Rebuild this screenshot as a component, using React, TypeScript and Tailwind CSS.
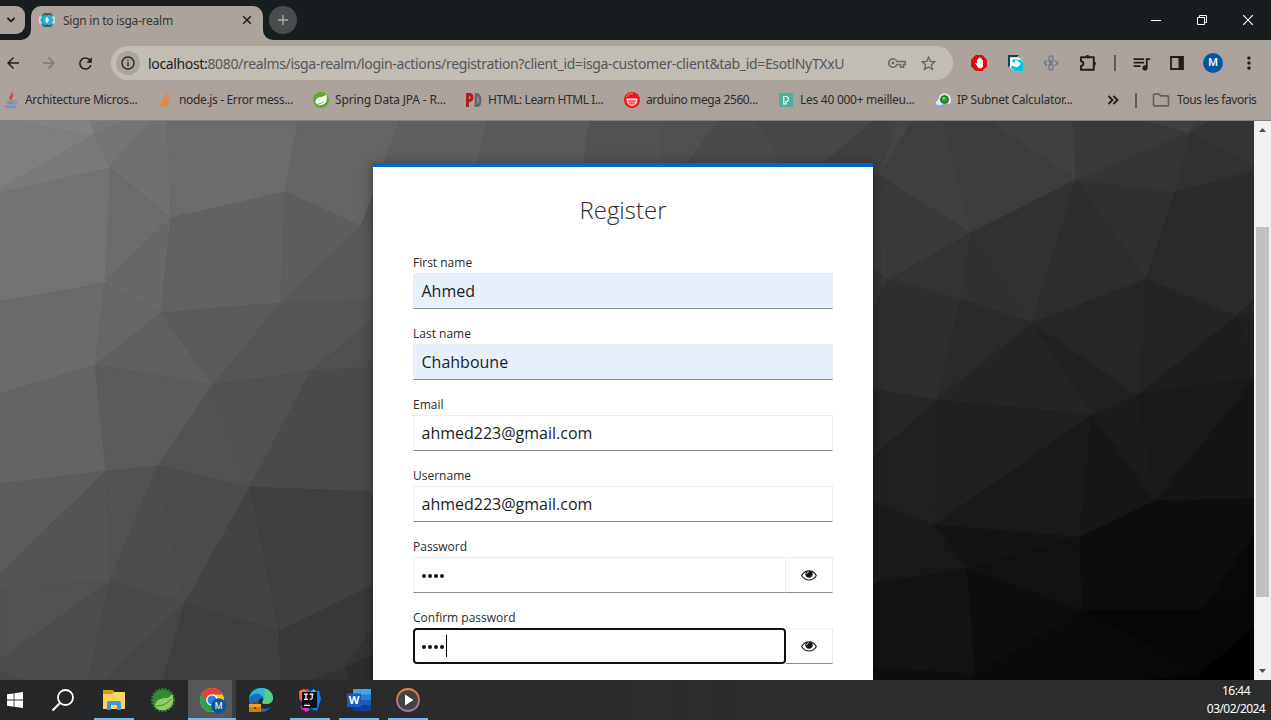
import type { ReactNode } from "react";
import {
  MdArrowBack,
  MdArrowForward,
  MdRefresh,
  MdInfoOutline,
  MdStarOutline,
  MdQueueMusic,
  MdMoreVert,
  MdOutlineFolder,
  MdOutlineExtension,
} from "react-icons/md";

const facets: [string, string][] = [
  ["0,121 10,121 94,135 0,189", "#7f7f7f"],
  ["10,121 91,121 94,135", "#838383"],
  ["91,121 127,121 94,135", "#797979"],
  ["94,135 127,121 151,121 110,168", "#757575"],
  ["94,135 110,168 0,193 0,189", "#7a7a7a"],
  ["151,121 167,121 171,218 110,168", "#717171"],
  ["110,168 171,218 105,283", "#6c6c6c"],
  ["0,193 110,168 105,283 0,302", "#737373"],
  ["167,121 298,121 285,192 171,218", "#6b6b6b"],
  ["298,121 399,121 373,195 361,226 285,192", "#646464"],
  ["171,218 105,283 161,313", "#686868"],
  ["171,218 285,192 281,303 161,313", "#616161"],
  ["285,192 361,226 281,303", "#5d5d5d"],
  ["361,226 380,225 380,300 281,303", "#585858"],
  ["361,226 373,195 380,195 380,225", "#575757"],
  ["0,302 105,283 95,365 0,394", "#6a6a6a"],
  ["105,283 161,313 95,365", "#656565"],
  ["161,313 95,365 213,385", "#5f5f5f"],
  ["161,313 281,303 213,385", "#5a5a5a"],
  ["281,303 213,385 311,371", "#555555"],
  ["281,303 380,300 380,312 311,371", "#555555"],
  ["311,371 380,312 380,367", "#505050"],
  ["95,365 0,394 0,484 106,471", "#636363"],
  ["95,365 106,471 158,466 213,385", "#5b5b5b"],
  ["213,385 158,466 250,487", "#525252"],
  ["213,385 311,371 250,487", "#515151"],
  ["311,371 380,367 380,492 250,487", "#4b4b4b"],
  ["106,471 0,484 0,574", "#5c5c5c"],
  ["106,471 0,574 0,588 110,581", "#545454"],
  ["106,471 158,466 110,581", "#525252"],
  ["158,466 110,581 185,603", "#4d4d4d"],
  ["158,466 185,603 250,487", "#4c4c4c"],
  ["250,487 185,603 279,631", "#444444"],
  ["250,487 380,492 380,582 279,631", "#404040"],
  ["110,581 0,588 0,660", "#525252"],
  ["110,581 0,660 0,671 23,680 89,680", "#4d4d4d"],
  ["0,671 23,680 0,680", "#484848"],
  ["110,581 89,680 107,680 185,603", "#4a4a4a"],
  ["185,603 107,680 163,680", "#464646"],
  ["185,603 163,680 281,680 279,631", "#3f3f3f"],
  ["279,631 281,680 313,680 345,667 380,618 380,582", "#383838"],
  ["345,667 380,618 380,652", "#333333"],
  ["345,667 380,652 380,680 348,680", "#2c2c2c"],
  ["313,680 345,667 348,680", "#323232"],
  ["399,121 487,121 475,175 380,175", "#5e5e5e"],
  ["487,121 590,121 581,175 475,175", "#595959"],
  ["590,121 664,121 660,175 581,175", "#525252"],
  ["664,121 718,121 679,175 660,175", "#505050"],
  ["718,121 757,121 790,175 679,175", "#4b4b4b"],
  ["757,121 873,121 810,175 790,175", "#484848"],
  ["873,121 896,121 880,176 810,175", "#414141"],
  ["896,121 912,121 880,176", "#454545"],
  ["912,121 943,121 971,233 880,176", "#3f3f3f"],
  ["943,121 990,121 1076,180 971,233", "#3c3c3c"],
  ["990,121 1073,121 1076,180", "#404040"],
  ["1073,121 1147,121 1189,133 1076,180", "#393939"],
  ["1147,121 1195,121 1189,133", "#414141"],
  ["1195,121 1211,121 1189,133", "#3b3b3b"],
  ["1211,121 1254,121 1254,166 1189,133", "#343434"],
  ["1189,133 1254,166 1254,171 1175,192", "#313131"],
  ["1076,180 1189,133 1175,192", "#343434"],
  ["1076,180 1175,192 1146,279", "#303030"],
  ["870,170 880,176 888,280 870,265", "#3b3b3b"],
  ["880,176 971,233 888,280", "#393939"],
  ["870,265 888,280 870,312", "#343434"],
  ["971,233 888,280 961,299", "#333333"],
  ["971,233 961,299 1032,323", "#303030"],
  ["971,233 1032,323 1076,180", "#313131"],
  ["1032,323 1076,180 1146,279", "#2d2d2d"],
  ["1175,192 1146,279 1236,316", "#2a2a2a"],
  ["1175,192 1254,171 1254,299 1236,316", "#2b2b2b"],
  ["1236,316 1254,299 1254,313", "#242424"],
  ["1236,316 1254,313 1254,363", "#202020"],
  ["1236,316 1137,395 1146,279", "#242424"],
  ["1032,323 1146,279 1137,395", "#262626"],
  ["1032,323 1137,395 1092,415", "#212121"],
  ["888,280 961,299 937,400 870,388 870,312", "#2e2e2e"],
  ["961,299 1032,323 937,400", "#2a2a2a"],
  ["937,400 1032,323 1092,415", "#252525"],
  ["1236,316 1254,363 1254,377 1137,395", "#1e1e1e"],
  ["1137,395 1254,377 1254,380 1155,501", "#1a1a1a"],
  ["1155,501 1254,380 1254,498", "#151515"],
  ["1137,395 1155,501 1092,415", "#1c1c1c"],
  ["937,400 870,388 870,459", "#272727"],
  ["937,400 870,459 870,500 934,525", "#212121"],
  ["937,400 1092,415 934,525", "#202020"],
  ["934,525 1092,415 1080,537", "#1a1a1a"],
  ["1092,415 1080,537 1155,501", "#171717"],
  ["1080,537 1155,501 1202,610", "#0e0e0e"],
  ["1155,501 1254,498 1254,533 1202,610", "#0d0d0d"],
  ["1202,610 1254,533 1254,597", "#080808"],
  ["1202,610 1254,597 1254,625 1201,674", "#060606"],
  ["1201,674 1254,625 1254,680 1195,680", "#000000"],
  ["934,525 870,500 870,584 876,583", "#1b1b1b"],
  ["934,525 876,583 967,569", "#181818"],
  ["934,525 967,569 1080,537", "#141414"],
  ["967,569 1080,537 1082,610", "#111111"],
  ["1080,537 1082,610 1202,610", "#0c0c0c"],
  ["876,583 967,569 975,674 870,667 870,584", "#131313"],
  ["967,569 1082,610 975,674", "#0d0d0d"],
  ["975,674 1082,610 1039,680 968,680", "#0a0a0a"],
  ["1082,610 1202,610 1201,674", "#060606"],
  ["1082,610 1201,674 1150,680 1039,680", "#080808"],
  ["975,674 870,667 870,680 968,680", "#0e0e0e"],
  ["1201,674 1150,680 1195,680", "#030303"],
];

function Backdrop() {
  return (
    <svg
      viewBox="0 121 1254 559"
      className="col-start-1 row-start-1 h-[559px] w-[1254px] bg-[#404040]"
    >
      {facets.map(([points, color]) => (
        <polygon key={points} points={points} fill={color} stroke={color} strokeWidth="0.6" />
      ))}
    </svg>
  );
}

/* ---------- favicons ---------- */

function KeycloakIcon() {
  return (
    <svg viewBox="0 0 16 14" className="h-[14px] w-4">
      <path d="M4.500 0h7.500l1.500 2.500v9L12 14H4.500L3 11.500v-9z" fill="#56565a" />
      <path d="M0 3.500h16v7H0z" fill="#cfd3d6" />
      <path d="M7 1.800 4.500 1.800 1.500 7l3 5.200H7L4.500 7z" fill="#00a9d4" />
      <path d="M9 1.800h2.500L14.500 7l-3 5.200H9L11.500 7z" fill="#19b9e2" />
      <path d="M5.500 2.500h5L13 7l-2.500 4.500h-5L3.500 7z" fill="#1fb6de" />
      <path d="M8 3.500 10 7l-2 3.500L6 7z" fill="#f1f6f8" />
    </svg>
  );
}

function JavaIcon() {
  return (
    <svg viewBox="0 0 16 16" className="size-4" fill="none">
      <path d="M9 .5c1.500 2-3.500 3.500-2 6 .4.700 1 1.200 1 1.800M10.500 3.500c-2.500 1.200-2.500 2.200-1.500 3.400" stroke="#d8452c" strokeWidth="1.400" />
      <path d="M4 9.200c2 .8 5.500.8 7.500 0M4.500 11.200c2 .7 4.500.7 6.500 0M2 13.500c1 2 10 2 11.500.3" stroke="#6c8cd6" strokeWidth="1.700" />
      <path d="M12 9c2.500-.6 2 2-.5 2.400" stroke="#6c8cd6" strokeWidth="1.100" />
    </svg>
  );
}

function StackIcon() {
  return (
    <svg viewBox="0 0 16 16" className="size-4" fill="none">
      <path d="M2.800 10.500v4.400h9.400v-4.400" stroke="#a3a19e" strokeWidth="1.100" />
      <path d="M4.500 12.800h6.300M4.600 10.300l6.300.7M5.100 7.600l6 1.900M6.400 4.900l5 3.300M9 2l3.200 4.900" stroke="#f48024" strokeWidth="1.500" />
    </svg>
  );
}

function SpringIcon() {
  return (
    <svg viewBox="0 0 16 16" className="size-4">
      <circle cx="8" cy="8" r="8" fill="#5fa832" />
      <path d="M13.300 2.200c1 3.800.8 7.200-1.500 9.300-2.200 2-5.700 1.700-8.300 1.500 3-.4 6-1.300 8-4-2 1.700-4.300 2.200-6.500 2.700-2.700.5-3-2.200-1.800-4.300C5 4 10.500 6 13.300 2.200z" fill="#fff" />
    </svg>
  );
}

function PdIcon() {
  return (
    <svg viewBox="0 0 16 14" className="h-[14px] w-4" fill="none" strokeWidth="2.800">
      <path d="M1.500 14V1.500h2c3.200 0 3.200 6 0 6H2" stroke="#b3161b" />
      <path d="M10 1.500v11h1.300c3.700 0 3.700-11 0-11z" stroke="#666" />
    </svg>
  );
}

function ArduinoIcon() {
  return (
    <svg viewBox="0 0 16 16" className="size-4" fill="none">
      <circle cx="8" cy="8" r="8" fill="#ee1515" />
      <path d="M3 7h10c-.2 8-9.800 8-10 0z" fill="#fbb" />
      <path d="M2.800 7h10.400M3 7c0 8.500 10 8.500 10 0" stroke="#fff" strokeWidth="1.100" />
      <path d="M3.500 9.200h9M5 11.400h6M6 7.500v5.500M8 7.500v6M10 7.500v5.500" stroke="#ee3535" strokeWidth=".7" />
      <path d="M2.500 5C4 2.300 6.500 1.400 9 1.700" stroke="#ff8b8b" />
    </svg>
  );
}

function PIcon() {
  return (
    <svg viewBox="0 0 14 14" className="size-[14px]">
      <rect width="14" height="14" rx="1.500" fill="#50ae9f" />
      <path d="M4.700 11V3.500h3.100l1.700 1.800v1.500L8.300 8.500H7V11z" fill="none" stroke="#fff" strokeWidth="1.200" />
    </svg>
  );
}

function SubnetIcon() {
  return (
    <svg viewBox="0 0 16 16" className="size-4">
      <path d="M1 12C0 9 4 8 4 6c0-3 4-6 8-4 4 1 4 5 4 7 0 4-4 3-7 4-4 3-7 2-8-1z" fill="#dfe8f2" />
      <path d="M1 12c2 2 5 1 8 0l5-1c-2 3-10 6-13 3z" fill="#86a5d2" />
      <circle cx="9.500" cy="7.500" r="4.300" fill="#2b3c33" />
      <circle cx="9.500" cy="7.500" r="3.200" fill="#22ad18" />
      <circle cx="8.800" cy="6.200" r="1.200" fill="#7de261" />
    </svg>
  );
}

/* ---------- browser chrome ---------- */

function TabStrip() {
  return (
    <div className="flex h-10 bg-[#181e20]">
      <div className="flex h-10 w-[31px] items-start bg-[linear-gradient(to_bottom,#181e20_30px,#aca49c_30px)]">
        <div className="flex h-10 w-[31px] rounded-br-[10px] bg-[#181e20] pt-[6px]">
          <div className="flex h-7 w-[25px] items-center justify-center rounded-r-[9px] bg-[#aca49c] pr-[3px]">
            <svg viewBox="0 0 10 6" className="h-[6px] w-[10px]" fill="none">
              <path d="m1.500 1 3.500 3.500L8.500 1" stroke="#202020" strokeWidth="1.800" />
            </svg>
          </div>
        </div>
      </div>
      <div className="mt-[6px] flex h-[34px] w-[232px] items-center rounded-t-[10px] bg-[#aca49c] pr-[11px] pb-[6px] pl-2">
        <KeycloakIcon />
        <span className="ml-2 flex-1 pt-px text-[12px] tracking-[-0.26px] whitespace-nowrap text-[#353537]">
          Sign in to isga-realm
        </span>
        <svg viewBox="0 0 10 10" className="size-[10px]">
          <path d="m1.200 1.200 7.600 7.600m0-7.600L1.200 8.800" stroke="#202020" strokeWidth="1.600" />
        </svg>
      </div>
      <div className="h-10 w-[10px] bg-[linear-gradient(to_bottom,#181e20_30px,#aca49c_30px)]">
        <div className="h-10 rounded-bl-[10px] bg-[#181e20]" />
      </div>
      <div className="mt-[6px] -ml-1 flex size-7 items-center justify-center rounded-full bg-[#4a4d4e]">
        <svg viewBox="0 0 10 10" className="size-[10px]">
          <path d="M5 0v10M0 5h10" stroke="#b5ada5" strokeWidth="1.300" />
        </svg>
      </div>
      <div className="ml-auto flex h-10 items-center gap-9 pr-[18px]">
        <svg viewBox="0 0 10 10" className="size-[10px]">
          <path d="M0 5.500h10" stroke="#fff" />
        </svg>
        <svg viewBox="0 0 10 10" className="size-[10px]" fill="none" stroke="#fff">
          <path d="M.5 2.500h7v7h-7zM2.500 2.500v-2h7v7h-2" />
        </svg>
        <svg viewBox="0 0 10 10" className="size-[10px]">
          <path d="m0 0 10 10M10 0 0 10" stroke="#fff" strokeWidth="1.200" />
        </svg>
      </div>
    </div>
  );
}

function Slot({ children }: { children: ReactNode }) {
  return <div className="flex w-9 shrink-0 items-center justify-center">{children}</div>;
}

function Toolbar() {
  return (
    <div className="flex h-[46px] items-center text-[#1f1f1f]">
      <div className="-ml-[5px] flex">
        <Slot><MdArrowBack className="size-[18px]" /></Slot>
        <Slot><MdArrowForward className="size-[18px] text-[#7c7670]" /></Slot>
        <Slot><MdRefresh className="size-[19px]" /></Slot>
      </div>
      <div className="ml-2 flex h-[34px] w-[842px] items-center rounded-full bg-[#c1bdb5] pl-[5px]">
        <div className="flex size-6 items-center justify-center rounded-full bg-[#aca49c]">
          <MdInfoOutline className="size-4 text-[#26272a]" />
        </div>
        <span className="ml-2 w-[732px] text-[14px] tracking-[-0.345px] whitespace-nowrap text-[#55565a]">
          <span className="text-[#1d1e21]">localhost:</span>
          8080/realms/isga-realm/login-actions/registration?client_id=isga-customer-client&amp;tab_id=EsotlNyTXxU
        </span>
        <svg viewBox="0 0 18 12" className="ml-[8px] h-3 w-[18px] shrink-0" fill="none" stroke="#6a6865" strokeWidth="1.500">
          <path d="M9 4.500h8.200v3h-1.700v2.800h-3V7.500H9a4.300 4.300 0 1 1 0-3z" />
          <circle cx="5" cy="6" r="1.400" fill="#6a6865" stroke="none" />
        </svg>
        <MdStarOutline className="ml-[13px] size-[19px] shrink-0 text-[#656361]" />
      </div>
      <div className="ml-2 flex">
        <Slot>
          <svg viewBox="0 0 16 16" className="size-4">
            <path d="M4.700 0h6.600L16 4.700v6.600L11.300 16H4.700L0 11.300V4.700z" fill="#e4080d" />
            <path d="m4 8 1.300-.3.700.8V4.200h1.100V3.200h1.300v-.7h1.200v1h1.200V5h1.200v5.300c0 4-4.800 4-6 .5z" fill="#fff" />
          </svg>
        </Slot>
        <Slot>
          <svg viewBox="0 0 16 16" className="size-4">
            <path d="M1 0h11l-2 2H3v8l-2 3z" fill="#10405f" />
            <path d="M3 2.500h9l4 4V16H7l-4-4z" fill="#fff" />
            <path d="M5.500 4.500h8L16 7v9H7.500l-3-3v-2h3V12h3L14 8.700 10.500 5.500H8v2H5.500z" fill="#00c3e0" />
            <path d="M6 7.700h4V5.500l3.500 3.200L10 12V9.800H6z" fill="#fff" />
          </svg>
        </Slot>
        <Slot>
          <svg viewBox="0 0 16 16" className="size-4" fill="none" stroke="#6c7489" strokeWidth="1.300">
            <rect x="6" y=".8" width="4" height="6.600" rx="2" />
            <rect x="6" y="8.600" width="4" height="6.600" rx="2" />
            <path d="M8 5v6M4 5.500 1.200 8 4 10.500M12 5.500 14.800 8 12 10.500" />
          </svg>
        </Slot>
        <Slot>
          <svg viewBox="0 0 18 18" className="ml-[2px] size-[18px]" fill="none" stroke="#1f1f1f" strokeWidth="1.900">
            <path d="M2 3.300h12.800v12.500H2V12c3.200-.5 3.200-4.300 0-4.800z" strokeLinejoin="round" />
            <path d="M6.300 3.300a2.200 2.200 0 0 1 4.400 0zM14.800 7.400a2.200 2.200 0 0 1 0 4.400z" fill="#1f1f1f" stroke="none" />
          </svg>
        </Slot>
        <div className="ml-px flex w-[17px] items-center justify-center">
          <div className="h-4 w-0.5 bg-[#5a5d61]" />
        </div>
        <Slot><MdQueueMusic className="size-[21px]" /></Slot>
        <Slot>
          <svg viewBox="0 0 14 14" className="size-[14px]">
            <path d="M1 1h12v12H1z" fill="none" stroke="#1f1f1f" strokeWidth="1.800" />
            <path d="M8.500 1H13v12H8.500z" fill="#1f1f1f" />
          </svg>
        </Slot>
        <Slot>
          <div className="flex size-5 items-center justify-center rounded-full bg-[#05579f] font-['Roboto',sans-serif] text-[11px] font-medium text-white">
            M
          </div>
        </Slot>
        <Slot><MdMoreVert className="size-[20px]" /></Slot>
      </div>
    </div>
  );
}

function Bookmark({ icon, label, className }: { icon: ReactNode; label: string; className: string }) {
  return (
    <div className={`flex shrink-0 items-center gap-[6px] ${className}`}>
      <div className="flex w-4 shrink-0 justify-center">{icon}</div>
      <span className="whitespace-nowrap">{label}</span>
    </div>
  );
}

function Bookmarks() {
  return (
    <div className="flex h-7 items-center pl-[3px] text-[12px] text-[#2a2b2e]">
      <Bookmark icon={<JavaIcon />} label="Architecture Micros..." className="w-[154px] tracking-[-0.3px]" />
      <Bookmark icon={<StackIcon />} label="node.js - Error mess..." className="w-[156px] tracking-[-0.35px]" />
      <Bookmark icon={<SpringIcon />} label="Spring Data JPA - R..." className="w-[153px] tracking-[-0.16px]" />
      <Bookmark icon={<PdIcon />} label="HTML: Learn HTML I..." className="w-[158px] tracking-[-0.41px]" />
      <Bookmark icon={<ArduinoIcon />} label="arduino mega 2560..." className="w-[154px] tracking-[-0.38px]" />
      <Bookmark icon={<PIcon />} label="Les 40 000+ meilleu..." className="w-[157px] tracking-[-0.27px]" />
      <Bookmark icon={<SubnetIcon />} label="IP Subnet Calculator..." className="w-[172px] tracking-[-0.29px]" />
      <svg viewBox="0 0 12 10" className="h-[10px] w-3" fill="none">
        <path d="m1.500 1 4 4-4 4M6.500 1l4 4-4 4" stroke="#1f1f1f" strokeWidth="1.800" />
      </svg>
      <div className="ml-4 h-[15px] w-0.5 bg-[#5a5d61]" />
      <MdOutlineFolder className="ml-[14px] size-5 text-[#5f6163]" />
      <span className="ml-[6px] tracking-[-0.42px] whitespace-nowrap">Tous les favoris</span>
    </div>
  );
}

/* ---------- registration form ---------- */

function EyeIcon() {
  return (
    <svg viewBox="0 0 16 11" className="mt-px h-[11px] w-4">
      <path d="M8 .3c3.200 0 5.900 1.900 7.700 4.700.2.300.2.600 0 .9C13.900 8.700 11.200 10.500 8 10.500S2.100 8.700.3 5.900a.9.900 0 0 1 0-.9C2.100 2.200 4.800.3 8 .3z" fill="#151515" />
      <path d="M1.300 5.500C2.300 3.900 3.500 2.600 4.900 1.900a4 4 0 0 0-.6 2.100c0 5 7.400 5 7.400 0a4 4 0 0 0-.6-2.100c1.400.7 2.600 2 3.600 3.600C13.200 7.900 10.900 9.500 8 9.500S2.800 7.900 1.300 5.500z" fill="#fff" />
      <path d="M5.800 4C5.800 2.600 6.700 1.700 8 1.700" stroke="#fff" strokeWidth=".8" fill="none" />
    </svg>
  );
}

function Field({ label, value, filled }: { label: string; value: string; filled?: boolean }) {
  return (
    <label className="flex h-[71px] flex-col">
      <span className="h-[21px] text-[12px] leading-[21px] text-[#2a2a2a]">{label}</span>
      <span
        className={`flex h-9 items-center border border-[#ededed] border-b-[#8a8d90] pl-[7.5px] text-[16px] text-[#1c1c1c] ${filled ? "bg-[#e8f0fe]" : "bg-white"}`}
      >
        {value}
      </span>
    </label>
  );
}

function Dots() {
  return (
    <div className="mt-px flex gap-[2px]">
      {[0, 1, 2, 3].map((n) => (
        <div key={n} className="size-1 rounded-full bg-[#111]" />
      ))}
    </div>
  );
}

function PasswordField({ label, focused }: { label: string; focused?: boolean }) {
  return (
    <div className="flex h-[71px] flex-col">
      <span className="h-[21px] text-[12px] leading-[21px] text-[#2a2a2a]">{label}</span>
      <div className="flex h-9">
        <div
          className={
            focused
              ? "flex w-[373px] items-center rounded-[4px] border-2 border-[#101010] pl-[7px]"
              : "flex w-[372px] items-center border border-[#ededed] border-r-0 border-b-[#8a8d90] pl-2"
          }
        >
          <Dots />
          {focused && <div className="ml-[2px] h-[22px] w-px bg-black" />}
        </div>
        <div
          className={
            focused
              ? "flex flex-1 items-center justify-center border border-l-0 border-[#ededed] border-b-[#8a8d90] pr-px"
              : "flex flex-1 items-center justify-center border border-[#ededed] border-b-[#8a8d90]"
          }
        >
          <EyeIcon />
        </div>
      </div>
    </div>
  );
}

function RegisterCard() {
  return (
    <div className="col-start-1 row-start-1 mt-[42px] ml-[373px] h-[560px] w-[500px] border-t-4 border-[#0066cc] bg-white px-10 font-['Open_Sans',sans-serif] shadow-[0_2px_12px_rgba(3,3,3,0.4)]">
      <h1 className="mt-[25px] mb-[24px] text-center text-[24px] leading-9 font-light text-[#2a2a2a]">Register</h1>
      <Field label="First name" value="Ahmed" filled />
      <Field label="Last name" value="Chahboune" filled />
      <Field label="Email" value="ahmed223@gmail.com" />
      <Field label="Username" value="ahmed223@gmail.com" />
      <PasswordField label="Password" />
      <PasswordField label="Confirm password" focused />
    </div>
  );
}

function Scrollbar() {
  return (
    <div className="flex w-[17px] flex-col items-center bg-[#f1f1f1]">
      <svg viewBox="0 0 17 17" className="h-[17px] w-[17px] shrink-0">
        <path d="M5 11h7L8.500 7z" fill="#505050" />
      </svg>
      <div className="mt-[89px] h-[370px] w-[13px] bg-[#c1c1c1]" />
      <svg viewBox="0 0 17 17" className="mt-auto h-[17px] w-[17px] shrink-0">
        <path d="M5 6h7l-3.500 4z" fill="#505050" />
      </svg>
    </div>
  );
}

/* ---------- taskbar ---------- */

function Task({ children, open, active }: { children: ReactNode; open?: boolean; active?: boolean }) {
  return (
    <div className={`flex w-[49px] flex-col items-center ${active ? "bg-[linear-gradient(to_right,transparent_1px,#56585a_1px,#56585a_45px,#3b3c3d_45px)]" : ""}`}>
      <div className="flex h-[38px] items-center justify-center pt-[2px]">{children}</div>
      {open && <div className={`h-0.5 bg-[#76b9ed] ${active ? "ml-px w-12" : "w-10"}`} />}
    </div>
  );
}

function Taskbar() {
  return (
    <div className="flex h-10 bg-[linear-gradient(to_right,#242628,#2b2b2b_35%,#2b2d2d)]">
      <div className="flex w-10 items-center pl-[7px]">
        <svg viewBox="0 0 16 16" className="size-4" fill="#fff">
          <path d="M0 2.300 6.600 1.400v6.200H0zM7.400 1.200 16 0v7.600H7.400zM0 8.400h6.600v6.300L0 13.800zM7.400 8.400H16V16l-8.600-1.200z" />
        </svg>
      </div>
      <Task>
        <svg viewBox="0 0 24 24" className="mr-[3px] size-6" fill="none" stroke="#fff" strokeWidth="1.800">
          <circle cx="14.500" cy="9.500" r="7.500" />
          <path d="M9 15 1.500 22.500" strokeWidth="2.200" />
        </svg>
      </Task>
      <Task open>
        <svg viewBox="0 0 22 20" className="h-5 w-[22px]">
          <path d="M0 0h10l2 3v4H0z" fill="#d99a16" />
          <path d="M0 4h9l2-2h11v17H0z" fill="#ffd45e" />
          <path d="M4 20v-7q0-2 2-2h10q2 0 2 2v7h-4v-5H8v5z" fill="#4197d2" />
        </svg>
      </Task>
      <Task>
        <svg viewBox="0 0 24 24" className="size-6">
          <circle cx="12" cy="12" r="10.600" fill="none" stroke="#2f8a2c" strokeWidth="2.800" strokeDasharray="1.800 1.400" />
          <circle cx="12" cy="12" r="10.500" fill="#328b30" />
          <path d="M21.500 6c2 8 0 14-7.500 16-5 1-9-1-10-4 0-6 6-8 11-8 3 0 4.500-2 6.500-4z" fill="#91cf65" />
          <path d="M5 18c6 0 11-2 15-7" stroke="#37822d" fill="none" />
        </svg>
      </Task>
      <Task open active>
        <svg viewBox="0 0 27 26" className="mt-[2px] ml-[3px] h-[26px] w-[27px]">
          <circle cx="12" cy="12" r="12" fill="#f8c82c" />
          <path d="M1.600 6A12 12 0 0 0 12 24l5-9-5-3z" fill="#2da14f" />
          <path d="M12 6.500h10.700A12 12 0 0 0 1.600 6l5.500 8.500z" fill="#dd4435" />
          <circle cx="12" cy="12" r="5.800" fill="#fff" />
          <circle cx="12" cy="12" r="4.500" fill="#347fe5" />
          <circle cx="18.800" cy="17.800" r="7.600" fill="#05579f" />
          <text x="18.800" y="21.200" fill="#fff" fontSize="9" textAnchor="middle" fontFamily="Roboto, sans-serif">M</text>
        </svg>
      </Task>
      <Task>
        <svg viewBox="0 0 24 24" className="size-6">
          <path d="M0 11C1-3.500 23-4 24 10c0 5-4 6-8 6-3 0-3-2-2-3 2-5-5-8-10-5-2 1-3 2-4 3z" fill="#2fb4d2" />
          <path d="M15 .4C21.500 2 24 6 24 10c0 5-4 6-8 6-3 0-3-2-2-3 2-3 2-8 1-12.600z" fill="#55cf82" />
          <path d="M0 11C3 4 13 4 14 11c-4-2-6 3-4 7 2 3 7 4 12 1-5 8-22 7-22-8z" fill="#126fc2" />
          <path d="M0 16h12v8H0z" fill="#d27c0c" />
          <path d="M0 16h12v3H0z" fill="#f1a22b" />
          <path d="M4 16v-2h4v2M5 19h2v2H5z" fill="#67400c" />
        </svg>
      </Task>
      <Task open>
        <svg viewBox="0 0 24 24" className="size-6">
          <path d="m1 3 9-2 3 8-3 14-7-2 2-6-4-4z" fill="#fe315d" />
          <path d="m1 3 5-2 5 4-8 8z" fill="#f97a12" />
          <path d="m10 1 5 4 6-3 2 9-4 12-8-3z" fill="#087cfa" />
          <path d="m12 4 4-3 3 4-2 5z" fill="#23d1ef" />
          <path d="m2 18 7-1 3 5-4 2z" fill="#d93ccf" />
          <path d="M4 4h15v16H4z" fill="#100c10" />
          <path d="M6 6.200h4M8 6v5.500M6 11.300h4M11.500 6.200h4M14.200 6v4q0 1.500-2.500 1.200M6 17.300h6" fill="none" stroke="#fff" strokeWidth="1.200" />
        </svg>
      </Task>
      <Task open>
        <svg viewBox="0 0 24 22" className="h-[22px] w-6">
          <path d="M6 0h18v6H6z" fill="#41a5ee" />
          <path d="M6 5.500h18V11H6z" fill="#2b7cd3" />
          <path d="M6 11h18v5.500H6z" fill="#185abd" />
          <path d="M6 16.500h18V22H6z" fill="#103f91" />
          <path d="M0 4.500h14v13.500H0z" fill="#185abd" />
          <text x="7" y="15.300" fill="#fff" fontSize="11" fontWeight="700" textAnchor="middle" fontFamily="Open Sans, sans-serif">W</text>
        </svg>
      </Task>
      <Task open>
        <svg viewBox="0 0 24 24" className="size-6">
          <defs>
            <linearGradient id="ring" x1="0" y1="0" x2="0" y2="1">
              <stop stopColor="#ef823d" />
              <stop offset=".5" stopColor="#c9795f" />
              <stop offset="1" stopColor="#9873c4" />
            </linearGradient>
          </defs>
          <circle cx="12" cy="12" r="11" fill="#414345" stroke="url(#ring)" strokeWidth="1.800" />
          <path d="m9 6.500 8.500 5.500L9 17.500z" fill="#fff" />
        </svg>
      </Task>
      <div className="mr-[5px] ml-auto flex w-[60px] flex-col items-center pt-[2px] text-[12px] leading-[18px] tracking-[-0.55px] whitespace-nowrap text-white">
        <span>16:44</span>
        <span>03/02/2024</span>
      </div>
    </div>
  );
}

export default function App() {
  return (
    <div className="flex h-[720px] w-[1271px] flex-col overflow-hidden font-['Noto_Sans','Open_Sans',sans-serif]">
      <TabStrip />
      <div className="h-[81px] border-b border-[#85807a] bg-[#aca49c]">
        <Toolbar />
        <Bookmarks />
      </div>
      <div className="flex h-[559px] overflow-hidden">
        <div className="grid h-[559px] w-[1254px] grid-cols-1 grid-rows-[559px] overflow-hidden">
          <Backdrop />
          <RegisterCard />
        </div>
        <Scrollbar />
      </div>
      <Taskbar />
    </div>
  );
}
